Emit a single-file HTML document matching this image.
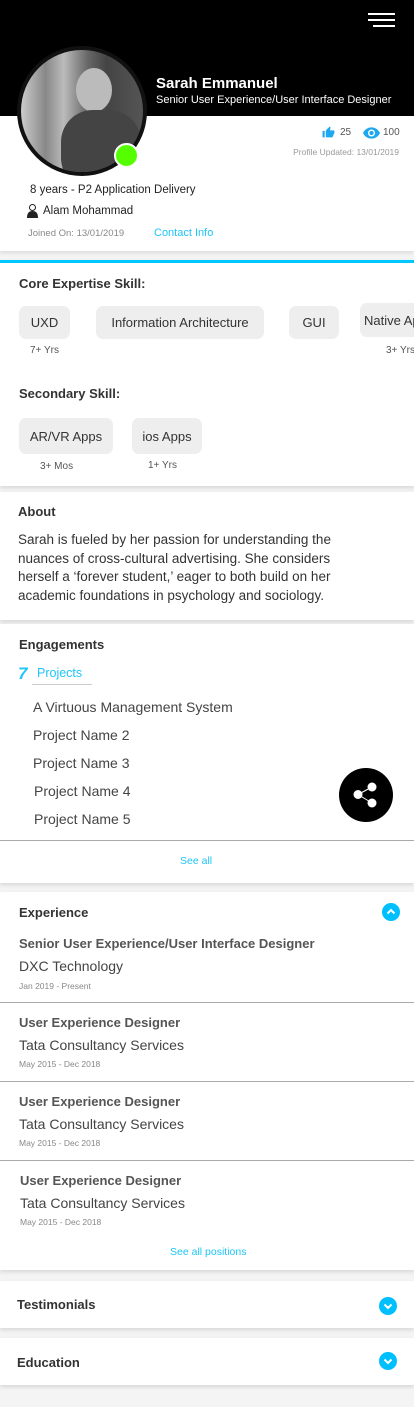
<!DOCTYPE html>
<html><head><meta charset="utf-8"><style>
*{margin:0;padding:0;box-sizing:border-box}
body{width:414px;height:1407px;background:#f4f4f4;font-family:"Liberation Sans",sans-serif;position:relative;overflow:hidden;color:#333}
.a{position:absolute;white-space:nowrap}
.card{position:absolute;left:0;width:414px;background:#fff;box-shadow:0 2px 4px rgba(0,0,0,.12)}
.h{font-weight:bold;font-size:13px;color:#333}
.chip{position:absolute;background:#eee;border-radius:7px;font-size:13px;color:#333;display:flex;align-items:center;justify-content:center;white-space:nowrap;overflow:hidden}
.yr{position:absolute;font-size:10px;color:#555;white-space:nowrap}
.p{position:absolute;left:33px;font-size:14px;color:#444}
.et{position:absolute;left:19px;font-size:13px;font-weight:bold;color:#555}
.ec{position:absolute;left:19px;font-size:14px;color:#444}
.ed{position:absolute;left:19px;font-size:8.5px;color:#888}
.hr{position:absolute;left:0;width:414px;height:1px;background:#aaa}
.blue{color:#1ec5f7}
.ci{position:absolute;width:18px;height:18px;border-radius:50%;background:#00bfff}
</style></head><body>
<div class="a" style="left:0;top:0;width:414px;height:116px;background:#000"></div>
<div class="a" style="left:368px;top:13px;width:27px;height:2px;background:#fff"></div>
<div class="a" style="left:368px;top:19px;width:27px;height:2px;background:#fff"></div>
<div class="a" style="left:373px;top:25px;width:22px;height:2px;background:#fff"></div>
<div class="card" style="top:116px;height:135px;box-shadow:0 2px 4px rgba(0,0,0,.1)"></div>
<div class="a" style="left:156px;top:75px;font-size:15px;font-weight:bold;color:#fff">Sarah Emmanuel</div>
<div class="a" style="left:156px;top:94px;font-size:11px;color:#fff">Senior User Experience/User Interface Designer</div>
<div class="a" style="left:17px;top:46px;width:130px;height:130px;border-radius:50%;background:#111;padding:4px">
<div style="position:relative;width:122px;height:122px;border-radius:50%;overflow:hidden;background:linear-gradient(90deg,#ccc 0,#888 20%,#bbb 35%,#666 55%,#444 70%,#555 100%)"><div style="position:absolute;left:55px;top:18px;width:36px;height:44px;border-radius:50%;background:#bbb"></div><div style="position:absolute;left:40px;top:60px;width:80px;height:80px;border-radius:40%;background:#444"></div></div></div>
<div class="a" style="left:114px;top:143px;width:25px;height:25px;border-radius:50%;background:#5f0;border:2px solid #fff"></div>
<svg class="a" style="left:322px;top:126px" width="13" height="13" viewBox="0 0 24 24"><path fill="#1ea8f0" d="M1 21h4V9H1v12zm22-11c0-1.1-.9-2-2-2h-6.3l1-4.6v-.3c0-.4-.2-.8-.4-1.1L14.200 1 7.6 7.6C7.2 8 7 8.5 7 9v10c0 1.1.9 2 2 2h9c.8 0 1.5-.5 1.8-1.2l3-7.1c.1-.2.2-.5.2-.7v-2z"/></svg>
<div class="a" style="left:340px;top:127px;font-size:10px;color:#555">25</div>
<svg class="a" style="left:363px;top:127px" width="17" height="12" viewBox="0 0 24 16"><path fill="#1ea8f0" d="M12 0C6.5 0 2 3.5 0 8c2 4.5 6.5 8 12 8s10-3.5 12-8c-2-4.5-6.5-8-12-8zm0 13a5 5 0 110-10 5 5 0 010 10zm0-8a3 3 0 100 6 3 3 0 000-6z"/></svg>
<div class="a" style="left:383px;top:127px;font-size:10px;color:#555">100</div>
<div class="a" style="right:15px;top:147px;font-size:8.5px;color:#999">Profile Updated: 13/01/2019</div>
<div class="a" style="left:30px;top:184px;font-size:11.5px;color:#222">8 years - P2 Application Delivery</div>
<svg class="a" style="left:27px;top:204px" width="11" height="14" viewBox="0 0 11 14"><circle cx="5.5" cy="3.5" r="3" fill="none" stroke="#222"/><path d="M0 14c0-5 2-7 5.5-7S11 9 11 14z" fill="#222"/></svg>
<div class="a" style="left:43px;top:205px;font-size:11.5px;color:#222">Alam Mohammad</div>
<div class="a" style="left:28px;top:228px;font-size:9.5px;color:#888">Joined On: 13/01/2019</div>
<div class="a blue" style="left:154px;top:227px;font-size:11px">Contact Info</div>

<div class="card" style="top:260px;height:226px;border-top:3px solid #00c8ff"></div>
<div class="a h" style="left:19px;top:276px">Core Expertise Skill:</div>
<div class="chip" style="left:19px;top:306px;width:51px;height:33px">UXD</div>
<div class="chip" style="left:96px;top:306px;width:168px;height:33px">Information Architecture</div>
<div class="chip" style="left:289px;top:306px;width:50px;height:33px">GUI</div>
<div class="chip" style="left:360px;top:303px;width:70px;height:34px;justify-content:flex-start;padding-left:4px">Native Apps</div>
<div class="yr" style="left:30px;top:345px">7+ Yrs</div>
<div class="yr" style="left:386px;top:345px">3+ Yrs</div>
<div class="a h" style="left:19px;top:386px">Secondary Skill:</div>
<div class="chip" style="left:19px;top:418px;width:94px;height:36px">AR/VR Apps</div>
<div class="chip" style="left:132px;top:418px;width:70px;height:36px">ios Apps</div>
<div class="yr" style="left:40px;top:461px">3+ Mos</div>
<div class="yr" style="left:148px;top:460px">1+ Yrs</div>

<div class="card" style="top:492px;height:128px"></div>
<div class="a h" style="left:18px;top:504px">About</div>
<div class="a" style="left:18px;top:531px;font-size:13.5px;line-height:18.5px;color:#333;white-space:normal;width:355px">Sarah is fueled by her passion for understanding the nuances of cross-cultural advertising. She considers herself a ‘forever student,’ eager to both build on her academic foundations in psychology and sociology.</div>

<div class="card" style="top:624px;height:259px"></div>
<div class="a h" style="left:19px;top:637px">Engagements</div>
<div class="a blue" style="left:18px;top:664px;font-size:17px;font-weight:bold;font-style:italic">7</div>
<div class="a blue" style="left:37px;top:666px;font-size:12.5px">Projects</div>
<div class="a" style="left:32px;top:684px;width:60px;height:1px;background:#ccc"></div>
<div class="p" style="top:699px">A Virtuous Management System</div>
<div class="p" style="top:727px">Project Name 2</div>
<div class="p" style="top:755px">Project Name 3</div>
<div class="p" style="top:783px;left:34px">Project Name 4</div>
<div class="p" style="top:811px;left:34px">Project Name 5</div>
<div class="a" style="left:339px;top:768px;width:54px;height:54px;border-radius:50%;background:#000"></div>
<svg class="a" style="left:350px;top:779px" width="32" height="32" viewBox="0 0 32 32"><path d="M22 8L8 15.5M8 15.5L22 24" stroke="#fff" stroke-width="1"/><circle cx="22" cy="8" r="4.5" fill="#fff"/><circle cx="8" cy="15.5" r="4.5" fill="#fff"/><circle cx="22" cy="24" r="4.5" fill="#fff"/></svg>
<div class="hr" style="top:840px"></div>
<div class="a blue" style="left:180px;top:855px;font-size:10.5px">See all</div>

<div class="card" style="top:892px;height:378px"></div>
<div class="a h" style="left:19px;top:905px">Experience</div>
<div class="ci" style="left:382px;top:903px"></div>
<svg class="a" style="left:382px;top:903px" width="18" height="18"><path d="M5.5 10.5L9 7l3.5 3.5" stroke="#fff" stroke-width="2" fill="none"/></svg>
<div class="et" style="top:936px">Senior User Experience/User Interface Designer</div>
<div class="ec" style="top:958px">DXC Technology</div>
<div class="ed" style="top:981px">Jan 2019 - Present</div>
<div class="hr" style="top:1002px"></div>
<div class="et" style="top:1015px">User Experience Designer</div>
<div class="ec" style="top:1037px">Tata Consultancy Services</div>
<div class="ed" style="top:1059px">May 2015 - Dec 2018</div>
<div class="hr" style="top:1081px"></div>
<div class="et" style="top:1094px">User Experience Designer</div>
<div class="ec" style="top:1116px">Tata Consultancy Services</div>
<div class="ed" style="top:1138px">May 2015 - Dec 2018</div>
<div class="hr" style="top:1160px"></div>
<div class="et" style="top:1173px;left:20px">User Experience Designer</div>
<div class="ec" style="top:1195px;left:20px">Tata Consultancy Services</div>
<div class="ed" style="top:1217px;left:20px">May 2015 - Dec 2018</div>
<div class="a blue" style="left:170px;top:1246px;font-size:10.5px">See all positions</div>

<div class="card" style="top:1281px;height:47px"></div>
<div class="a h" style="left:17px;top:1297px">Testimonials</div>
<div class="ci" style="left:379px;top:1297px"></div>
<svg class="a" style="left:379px;top:1297px" width="18" height="18"><path d="M5.5 7.5L9 11l3.5-3.5" stroke="#fff" stroke-width="2" fill="none"/></svg>
<div class="card" style="top:1338px;height:47px"></div>
<div class="a h" style="left:17px;top:1355px">Education</div>
<div class="ci" style="left:379px;top:1352px"></div>
<svg class="a" style="left:379px;top:1352px" width="18" height="18"><path d="M5.5 7.5L9 11l3.5-3.5" stroke="#fff" stroke-width="2" fill="none"/></svg>
</body></html>
